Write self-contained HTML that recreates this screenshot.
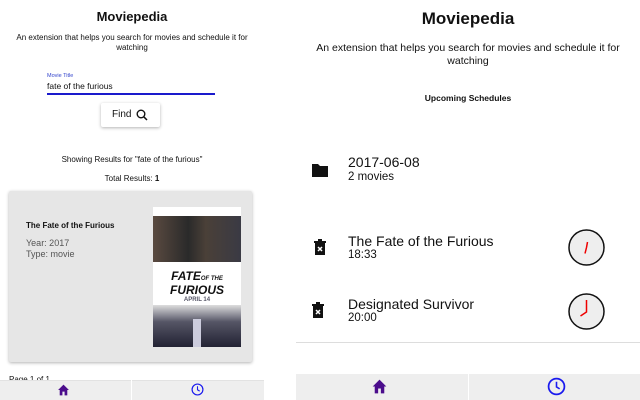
<!DOCTYPE html>
<html><head><style>
*{margin:0;padding:0;box-sizing:border-box}
body{width:640px;height:400px;overflow:hidden;background:#fff;font-family:"Liberation Sans",sans-serif;color:#111;position:relative}
.a{position:absolute;white-space:nowrap}
.c{text-align:center}
</style></head><body>
<!-- LEFT -->
<div class="a c" style="left:0;width:264px;top:9px;font-size:13px;font-weight:bold">Moviepedia</div>
<div class="a c" style="left:0;width:264px;top:33px;font-size:8px;line-height:10px">An extension that helps you search for movies and schedule it for<br>watching</div>
<div class="a" style="left:47px;top:73px;font-size:5.5px;color:#3344cc">Movie Title</div>
<div class="a" style="left:47px;top:81px;font-size:8.5px">fate of the furious</div>
<div class="a" style="left:47px;top:93px;width:168px;height:1.5px;background:#1a1acc"></div>
<div class="a" style="left:101px;top:103px;width:59px;height:24px;background:#fff;box-shadow:0 1px 3px rgba(0,0,0,.3);border-radius:2px;font-size:10px;line-height:24px;padding-left:11px">Find
<svg style="position:absolute;left:35px;top:6px" width="12" height="12" viewBox="0 0 12 12"><circle cx="5" cy="5" r="3.8" fill="none" stroke="#111" stroke-width="1.4"/><path d="M7.8 7.8L11 11" stroke="#111" stroke-width="1.5"/></svg></div>
<div class="a c" style="left:0;width:264px;top:155px;font-size:8px">Showing Results for "fate of the furious"</div>
<div class="a c" style="left:0;width:264px;top:174px;font-size:8px">Total Results: <b>1</b></div>
<div class="a" style="left:9px;top:191px;width:243px;height:171px;background:#e6e6e6;border-radius:2px;box-shadow:0 1px 3px rgba(0,0,0,.3)"></div>
<div class="a" style="left:26px;top:221px;font-size:8px;font-weight:bold">The Fate of the Furious</div>
<div class="a" style="left:26px;top:238px;font-size:9px;color:#555;line-height:11px">Year: 2017<br>Type: movie</div>
<div class="a" style="left:153px;top:207px;width:88px;height:140px;background:#fff;overflow:hidden">
 <div class="a" style="left:0;top:9px;width:88px;height:46px;background:linear-gradient(90deg,#5a4a40,#2a2a2a 40%,#4a4038 60%,#3a3a44)"></div>
 <div class="a c" style="left:0;width:88px;top:64px;font-size:12px;font-weight:bold;font-style:italic;line-height:11px;color:#111">FATE<span style="font-size:6px">OF THE</span><br>FURIOUS</div>
 <div class="a c" style="left:0;width:88px;top:90px;font-size:6px;font-weight:bold;color:#556">APRIL 14</div>
 <div class="a" style="left:0;top:98px;width:88px;height:42px;background:linear-gradient(180deg,#ddd,#556 40%,#223 100%)"></div>
 <div class="a" style="left:40px;top:112px;width:8px;height:28px;background:#ccd"></div>
</div>
<div class="a" style="left:9px;top:375px;font-size:8px">Page 1 of 1</div>
<div class="a" style="left:0;top:380px;width:264px;height:20px;background:#eee;border-top:1px solid #e2e2e2"></div>
<div class="a" style="left:131px;top:380px;width:1px;height:20px;background:#fff"></div>
<svg class="a" style="left:57px;top:384px" width="13" height="12" viewBox="0 0 24 22"><path d="M10 21v-7h4v7h5V11h3L12 1 2 11h3v10z" fill="#4b0d8c"/></svg>
<svg class="a" style="left:191px;top:383px" width="13" height="13" viewBox="0 0 24 24"><circle cx="12" cy="12" r="10" fill="none" stroke="#1a1aee" stroke-width="2.2"/><path d="M12 6v6.5l4 2.5" fill="none" stroke="#1a1aee" stroke-width="2"/></svg>
<!-- RIGHT -->
<div class="a c" style="left:296px;width:344px;top:9px;font-size:17px;font-weight:bold">Moviepedia</div>
<div class="a c" style="left:296px;width:344px;top:42px;font-size:10.5px;line-height:13px">An extension that helps you search for movies and schedule it for<br>watching</div>
<div class="a c" style="left:296px;width:344px;top:93px;font-size:8.5px;font-weight:bold">Upcoming Schedules</div>
<svg class="a" style="left:311px;top:162px" width="18" height="16" viewBox="0 0 18 16"><path d="M1 2h6l2 2h8v11H1z" fill="#111"/></svg>
<div class="a" style="left:348px;top:154px;font-size:14px">2017-06-08</div>
<div class="a" style="left:348px;top:171px;font-size:11.5px">2 movies</div>
<svg class="a" style="left:314px;top:239px" width="12" height="16" viewBox="0 0 12 16"><path d="M0 2h12v2H0zM4 0h4v2H4zM1 4h10v12H1z" fill="#111"/><path d="M4 8l4 4M8 8l-4 4" stroke="#fff" stroke-width="1.5"/></svg>
<div class="a" style="left:348px;top:233px;font-size:14px">The Fate of the Furious</div>
<div class="a" style="left:348px;top:249px;font-size:11.5px">18:33</div>
<svg class="a" style="left:567px;top:228px" width="39" height="39" viewBox="0 0 39 39"><circle cx="19.5" cy="19.5" r="17.5" fill="#eee" stroke="#111" stroke-width="1.5"/><path d="M19.5 19.5L18 25.5M19.5 19.5L20.5 14" stroke="#e00" stroke-width="1.5"/></svg>
<svg class="a" style="left:312px;top:302px" width="12" height="16" viewBox="0 0 12 16"><path d="M0 2h12v2H0zM4 0h4v2H4zM1 4h10v12H1z" fill="#111"/><path d="M4 8l4 4M8 8l-4 4" stroke="#fff" stroke-width="1.5"/></svg>
<div class="a" style="left:348px;top:296px;font-size:14px">Designated Survivor</div>
<div class="a" style="left:348px;top:312px;font-size:11.5px">20:00</div>
<svg class="a" style="left:567px;top:292px" width="39" height="39" viewBox="0 0 39 39"><circle cx="19.5" cy="19.5" r="17.5" fill="#eee" stroke="#111" stroke-width="1.5"/><path d="M19.5 8v12l-6 4" fill="none" stroke="#e00" stroke-width="1.5"/></svg>
<div class="a" style="left:296px;top:342px;width:344px;height:1px;background:#ddd"></div>
<div class="a" style="left:296px;top:374px;width:344px;height:26px;background:#eee"></div>
<div class="a" style="left:468px;top:374px;width:1px;height:26px;background:#fff"></div>
<svg class="a" style="left:371px;top:379px" width="17" height="15" viewBox="0 0 24 22"><path d="M10 21v-7h4v7h5V11h3L12 1 2 11h3v10z" fill="#4b0d8c"/></svg>
<svg class="a" style="left:547px;top:377px" width="19" height="19" viewBox="0 0 24 24"><circle cx="12" cy="12" r="10" fill="none" stroke="#1a1aee" stroke-width="2.2"/><path d="M12 6v6.5l4 2.5" fill="none" stroke="#1a1aee" stroke-width="2"/></svg>
</body></html>
